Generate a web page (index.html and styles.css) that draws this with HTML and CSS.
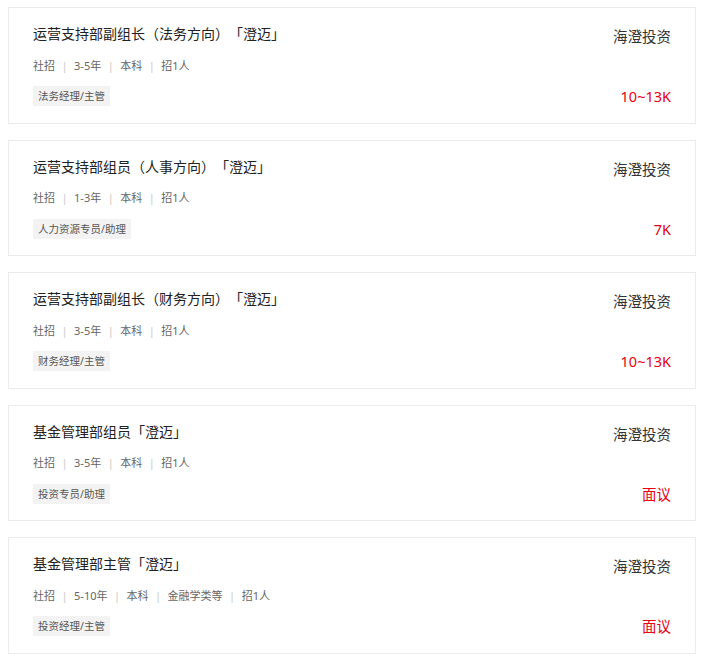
FILE: index.html
```html
<!DOCTYPE html>
<html lang="zh-CN">
<head>
<meta charset="utf-8">
<title>职位列表</title>
<link rel="stylesheet" href="styles.css">
</head>
<body>
<ul class="job-list">
  <li class="job-card">
    <div class="job-main">
      <div class="job-title">运营支持部副组长（法务方向）「澄迈」</div>
      <div class="job-meta"><span>社招</span><span class="sep">|</span><span>3-5年</span><span class="sep">|</span><span>本科</span><span class="sep">|</span><span>招1人</span></div>
      <div class="job-tags"><span class="tag">法务经理/主管</span></div>
    </div>
    <div class="job-side">
      <div class="company">海澄投资</div>
      <div class="salary">10~13K</div>
    </div>
  </li>
  <li class="job-card">
    <div class="job-main">
      <div class="job-title">运营支持部组员（人事方向）「澄迈」</div>
      <div class="job-meta"><span>社招</span><span class="sep">|</span><span>1-3年</span><span class="sep">|</span><span>本科</span><span class="sep">|</span><span>招1人</span></div>
      <div class="job-tags"><span class="tag">人力资源专员/助理</span></div>
    </div>
    <div class="job-side">
      <div class="company">海澄投资</div>
      <div class="salary">7K</div>
    </div>
  </li>
  <li class="job-card">
    <div class="job-main">
      <div class="job-title">运营支持部副组长（财务方向）「澄迈」</div>
      <div class="job-meta"><span>社招</span><span class="sep">|</span><span>3-5年</span><span class="sep">|</span><span>本科</span><span class="sep">|</span><span>招1人</span></div>
      <div class="job-tags"><span class="tag">财务经理/主管</span></div>
    </div>
    <div class="job-side">
      <div class="company">海澄投资</div>
      <div class="salary">10~13K</div>
    </div>
  </li>
  <li class="job-card">
    <div class="job-main">
      <div class="job-title">基金管理部组员「澄迈」</div>
      <div class="job-meta"><span>社招</span><span class="sep">|</span><span>3-5年</span><span class="sep">|</span><span>本科</span><span class="sep">|</span><span>招1人</span></div>
      <div class="job-tags"><span class="tag">投资专员/助理</span></div>
    </div>
    <div class="job-side">
      <div class="company">海澄投资</div>
      <div class="salary">面议</div>
    </div>
  </li>
  <li class="job-card">
    <div class="job-main">
      <div class="job-title">基金管理部主管「澄迈」</div>
      <div class="job-meta"><span>社招</span><span class="sep">|</span><span>5-10年</span><span class="sep">|</span><span>本科</span><span class="sep">|</span><span>金融学类等</span><span class="sep">|</span><span>招1人</span></div>
      <div class="job-tags"><span class="tag">投资经理/主管</span></div>
    </div>
    <div class="job-side">
      <div class="company">海澄投资</div>
      <div class="salary">面议</div>
    </div>
  </li>
</ul>
</body>
</html>
```

FILE: styles.css
```css
* { box-sizing: border-box; }

body {
  margin: 7px 8px 8px;
  background: #fff;
  font-family: "Noto Sans", "Noto Sans CJK SC", sans-serif;
  color: #333;
}

.job-list {
  list-style: none;
  margin: 0;
  padding: 0;
  display: flex;
  flex-direction: column;
  gap: 16px;
}

.job-card {
  display: flex;
  justify-content: space-between;
  border: 1px solid #ebebeb;
  background: #fff;
  padding: 15px 24px 16.5px;
}

.job-main {
  display: flex;
  flex-direction: column;
  min-width: 0;
}

.job-title {
  font-size: 14px;
  line-height: 20px;
  color: #222;
  font-family: "Noto Sans CJK SC", sans-serif;
  text-spacing-trim: space-all;
}

.job-meta {
  margin-top: 13.5px;
  font-size: 11px;
  line-height: 17px;
  color: #666;
  display: flex;
  align-items: center;
}

.job-meta .sep {
  color: #c8c8c8;
  margin: 0 6.5px;
}

.job-tags {
  margin-top: 12.5px;
  display: flex;
}

.tag {
  display: inline-block;
  height: 20px;
  line-height: 20px;
  padding: 0 5px;
  font-size: 10.5px;
  color: #555;
  background: #f3f3f3;
}

.job-side {
  display: flex;
  flex-direction: column;
  justify-content: space-between;
  align-items: flex-end;
}

.company {
  margin-top: 3px;
  font-size: 14.5px;
  line-height: 20px;
  color: #333;
  font-family: "Noto Sans CJK SC", sans-serif;
}

.salary {
  font-size: 14.5px;
  line-height: 20px;
  color: #e60012;
}
```
